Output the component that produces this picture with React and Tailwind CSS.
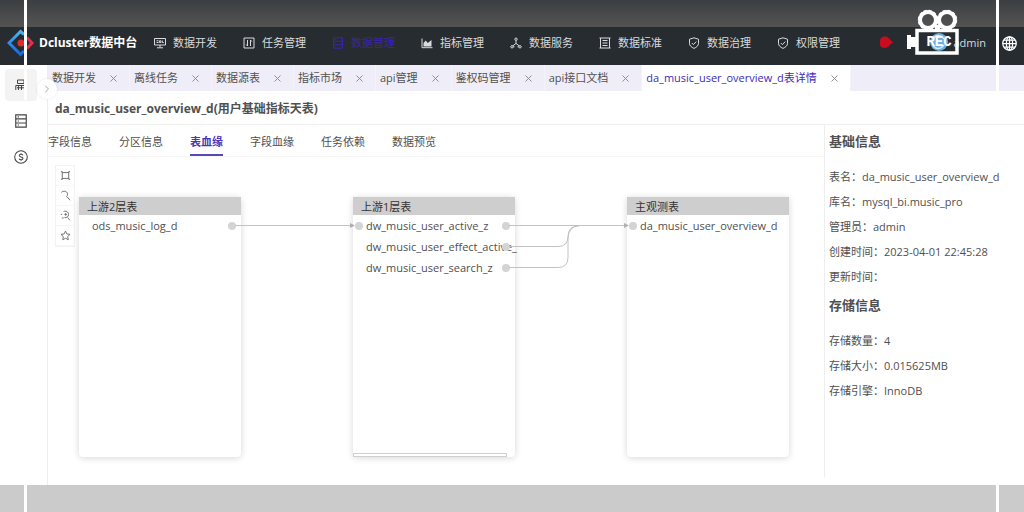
import React, { useState } from 'react';
import { ChevronRight, X } from 'lucide-react';

const Icon = ({ children, className = 'w-3 h-3' }) => (
  <svg viewBox="0 0 12 12" className={className} fill="none" stroke="currentColor" strokeWidth="1" aria-hidden="true">
    {children}
  </svg>
);

const ShieldIcon = () => (
  <Icon>
    <path d="M6 .8 10.5 2.2v4.2c0 2.2-1.8 3.8-4.5 5-2.7-1.2-4.5-2.8-4.5-5V2.2z" />
    <path d="m3.8 6 1.6 1.6 2.9-3" />
  </Icon>
);

const navItems = [
  {
    label: '数据开发',
    icon: (
      <Icon>
        <path d="M.5 1.5h11v6.5H.5zM6 8v2.5M3 10.8h6M2.5 3.8h2M2.5 5.5h2M5.5 3.8h1.4v1.7H5.5zM8.3 3.5v2h1.5" />
      </Icon>
    ),
  },
  {
    label: '任务管理',
    icon: (
      <Icon>
        <path d="M1 1h10v10H1zM4.500 3v6M3.200 7.500 4.500 9M7.500 9V3M7.500 3l1.300 1.500" />
      </Icon>
    ),
  },
  {
    label: '数据管理',
    icon: (
      <Icon>
        <path d="M1.5.8h9v10.4h-9zM1.5 4.2h9M1.5 7.7h9M3.2 2.5h1M3.2 6h1M3.2 9.4h1" />
      </Icon>
    ),
  },
  {
    label: '指标管理',
    icon: (
      <Icon>
        <path d="M1 1.5v9.2h10.5" />
        <path d="M2.5 9.5V6l2.2-2.4L6.8 6 10.5 3v6.5z" fill="currentColor" stroke="none" />
      </Icon>
    ),
  },
  {
    label: '数据服务',
    icon: (
      <Icon>
        <circle cx="6" cy="2.2" r="1.2" />
        <circle cx="2" cy="9.8" r="1.2" />
        <circle cx="10" cy="9.8" r="1.2" />
        <path d="M6 3.4v3L2.8 8.9M6 6.4l3.2 2.5M3.2 9.8h1.3M7.5 9.8h1.3" />
      </Icon>
    ),
  },
  {
    label: '数据标准',
    icon: (
      <Icon>
        <path d="M.5 1h11M.5 11h11M1.5 1v10M10.5 1v10M3.5 3.5h5M3.5 6h5M3.5 8.5h5" />
      </Icon>
    ),
  },
  { label: '数据治理', icon: <ShieldIcon /> },
  { label: '权限管理', icon: <ShieldIcon /> },
];

const openTabs = [
  '数据开发',
  '离线任务',
  '数据源表',
  '指标市场',
  'api管理',
  '鉴权码管理',
  'api接口文档',
  'da_music_user_overview_d表详情',
];

const detailTabs = ['字段信息', '分区信息', '表血缘', '字段血缘', '任务依赖', '数据预览'];

const baseInfo = [
  ['表名', 'da_music_user_overview_d'],
  ['库名', 'mysql_bi.music_pro'],
  ['管理员', 'admin'],
  ['创建时间', '2023-04-01 22:45:28'],
  ['更新时间', ''],
];

const storageInfo = [
  ['存储数量', '4'],
  ['存储大小', '0.015625MB'],
  ['存储引擎', 'InnoDB'],
];

const canvasTools = [
  {
    label: '框选',
    icon: <path d="M2.5 2.8h7M2.5 9.2h7M2.5 2.8v6.4M9.5 2.8v6.4M1 1.8h1.5v1.5M11 1.8H9.5v1.5M1 10.2h1.5V8.8M11 10.2H9.5V8.8" />,
  },
  { label: '放大', icon: <path d="M1.5 2.6C3.2.6 7.6.9 8.2 4c.3 1.6-.5 3-1.4 3.6M7.8 7.6l3.2 3.6" /> },
  {
    label: '缩小',
    icon: <path d="M3.8 1.8C6.2.4 9.5 2 9.3 5c-.1 2.5-2.4 3.8-4.5 3.2M8.2 8.2l2.6 3M.8 4.8h1.5M4.8 4.8h2.8M6.2 3.4v2.8M2 8.8h2" />,
  },
  { label: '收藏', icon: <path d="m6 1.2 1.5 3.1 3.4.5-2.5 2.4.6 3.4L6 9l-3 1.6.6-3.4-2.5-2.4 3.4-.5z" /> },
];

function Logo() {
  return (
    <svg viewBox="0 0 28 28" className="w-7 h-7 shrink-0" fill="none" aria-hidden="true">
      <defs>
        <linearGradient id="logoBlue" x1="0" y1="0" x2="0" y2="1">
          <stop offset="0" stopColor="#4bb4ea" />
          <stop offset="1" stopColor="#1668e8" />
        </linearGradient>
      </defs>
      <path d="M17 5.5 13.5 2.5 2 14l11.5 11.5L17 22" stroke="url(#logoBlue)" strokeWidth="3" />
      <path d="m20 8.5 5 5.5-5 5.5" stroke="#e0304a" strokeWidth="3" />
      <circle cx="14" cy="14" r="3.5" fill="#e02a30" />
    </svg>
  );
}

function GlobeIcon() {
  return (
    <Icon className="h-[15px] w-[15px] shrink-0 text-white">
      <circle cx="6" cy="6" r="5.4" />
      <ellipse cx="6" cy="6" rx="2.5" ry="5.4" />
      <path d="M6 .6v10.8M.6 6h10.8M1.4 3.2h9.2M1.4 8.8h9.2" />
    </Icon>
  );
}

function RecCamera() {
  return (
    <svg viewBox="0 0 54 48" className="absolute right-16 top-2 w-[54px] h-12 pointer-events-none" fill="none" aria-hidden="true">
      <circle cx="22" cy="12" r="8" stroke="#fff" strokeWidth="4" />
      <circle cx="41" cy="12" r="8" stroke="#fff" strokeWidth="4" />
      <circle cx="22" cy="12" r="9.500" stroke="#fff" strokeWidth="1.500" strokeDasharray="3 2" />
      <circle cx="41" cy="12" r="9.500" stroke="#fff" strokeWidth="1.500" strokeDasharray="3 2" />
      <path d="M29 17h5v5h-5z" fill="#fff" />
      <path d="M11 22.500h40v22.500H11z" stroke="#fff" strokeWidth="3.500" />
      <path d="M1 27h4v2h6v10H5v2H1z" fill="#fff" />
      <circle cx="33" cy="34" r="9" fill="#6aaee0" />
      <path d="M27 31c3-5 9-4 11 0M27 38c4 4 8 3 11-1" stroke="#d3e9f8" strokeWidth="1.500" />
      <text x="33" y="38" textAnchor="middle" fontSize="14" fontWeight="700" fill="#fff" fontFamily="Liberation Mono, monospace">
        REC
      </text>
    </svg>
  );
}

function LineageNode({ title, className, children }) {
  return (
    <div className={`absolute top-10 flex h-[260px] w-[162px] flex-col rounded-sm bg-white shadow-[0_1px_7px_rgba(0,0,0,0.16)] ${className}`}>
      <div className="h-[18px] bg-[#cecece] pl-2 leading-[20px] text-[#333]">{title}</div>
      {children}
    </div>
  );
}

function Field({ name, left, right }) {
  return (
    <div className="relative flex h-[21px] items-center pl-[13px]">
      {left && <span className="absolute left-[2px] h-2 w-2 rounded-full bg-[#d4d4d4]" />}
      <span className="whitespace-nowrap">{name}</span>
      {right && <span className="absolute right-[5px] h-2 w-2 rounded-full bg-[#d4d4d4]" />}
    </div>
  );
}

function InfoList({ title, rows }) {
  return (
    <section>
      <h2 className="py-1.5 text-[13px] font-bold leading-5">{title}</h2>
      <dl className="pt-[7px]">
        {rows.map(([label, value]) => (
          <div key={label} className="flex h-[25px] items-center whitespace-nowrap">
            <dt>{label}：</dt>
            <dd>{value}</dd>
          </div>
        ))}
      </dl>
    </section>
  );
}

// White guide lines of the recorder, one near each side of the window
function GuideLines({ className }) {
  return (
    <div className={`pointer-events-none absolute inset-x-0 flex justify-between pl-6 pr-[25px] ${className}`}>
      <span className="w-[3px] bg-white" />
      <span className="w-[3px] bg-white" />
    </div>
  );
}

export default function App() {
  const [activeTab, setActiveTab] = useState('表血缘');

  return (
    <div className="relative flex min-h-screen flex-col overflow-hidden bg-white font-['Open_Sans','Noto_Sans_CJK_SC',sans-serif] text-[11px] leading-4 text-[#505050]">
      <div className="h-[27px] bg-linear-to-b from-[#3b3f42] to-[#545353]" />

      {/* Top navigation */}
      <header className="flex h-[38px] items-center bg-[#272c30] pb-1.5 pl-[7px] pr-[7px] text-[#d9dbdc]">
        <Logo />
        <span className="ml-1 w-[115px] shrink-0 whitespace-nowrap text-xs font-bold text-white">Dcluster数据中台</span>
        <nav className="flex gap-[26px]">
          {navItems.map(item => (
            <a
              key={item.label}
              href="#"
              className={`flex items-center gap-[7px] whitespace-nowrap ${item.label === '数据管理' ? 'text-[#3a25a8]' : ''}`}
            >
              {item.icon}
              {item.label}
            </a>
          ))}
        </nav>
        <svg viewBox="0 0 14 14" className="ml-auto mr-[60px] h-3.5 w-3.5 shrink-0" aria-hidden="true">
          <path d="M1 5c0-5 7-6 9.500-2L14 6.500 11 8.500c-1 4-10 5-10 0z" fill="#c90d1e" />
        </svg>
        <span className="mr-4">admin</span>
        <GlobeIcon />
      </header>

      <div className="flex flex-1">
        {/* Side rail */}
        <aside className="relative flex w-12 shrink-0 flex-col items-center border-r border-[#eeeeee] pr-1.5 text-[#444]">
          <button aria-label="数据地图" className="mt-1 flex h-8 w-8 items-center justify-center rounded-sm bg-[#f3f3f4]">
            <Icon>
              <path d="M2.500 1h6.500v3.500H2.500zM.8 11V6.500h9.700V11M3.500 6.500V11M6.500 6.500V11M2 8.800h8.500M9 3h2" />
            </Icon>
          </button>
          <button aria-label="数据表" className="mt-1 flex h-8 w-8 items-center justify-center">
            <Icon className="h-3.5 w-3.5">
              <path d="M1.500.8h9v10.400h-9zM1.500 4.200h9M1.500 7.700h9M3.200 2.500h1M3.200 6h1M3.200 9.400h1" />
            </Icon>
          </button>
          <button aria-label="成本" className="mt-1 flex h-8 w-8 items-center justify-center">
            <Icon className="h-3.5 w-3.5">
              <circle cx="6" cy="6" r="5.400" strokeWidth="0.9" />
              <path d="M7.600 4.600C7.200 3.400 4.500 3.400 4.500 4.800c0 1.500 3.200.9 3.200 2.500C7.700 8.700 4.900 8.600 4.300 7.500M6 2.800v.9M6 8.400v.9" strokeWidth="0.9" />
            </Icon>
          </button>
          <button
            aria-label="展开"
            className="absolute -right-2.5 top-3.5 z-10 flex h-5 w-5 items-center justify-center rounded-full bg-white text-[#888] shadow-[0_0_3px_rgba(0,0,0,0.1)]"
          >
            <ChevronRight className="h-3 w-3" strokeWidth={1.5} />
          </button>
        </aside>

        <div className="flex min-w-0 flex-1 flex-col">
          {/* Opened pages */}
          <div className="flex h-[26px] bg-[#efeef8]">
            {openTabs.map((tab, i) => (
              <div
                key={tab}
                className={`flex items-center gap-3 whitespace-nowrap border-r border-[#f4f3fb] pl-1 pr-2.5 ${
                  i === openTabs.length - 1 ? 'bg-white text-[#3f2bb5]' : ''
                }`}
              >
                <a href="#">{tab}</a>
                <button aria-label={`关闭 ${tab}`} className="text-[#888]">
                  <X className="h-[11px] w-[11px]" strokeWidth={2} />
                </button>
              </div>
            ))}
          </div>

          <h1 className="h-[34px] border-b border-[#f0f0f0] pl-[7px] text-xs font-bold leading-9">
            da_music_user_overview_d(用户基础指标天表)
          </h1>

          <div className="flex flex-1">
            <main className="min-w-0 flex-1">
              <div role="tablist" className="flex h-8 gap-[27px] border-b border-[#f5f5f5]">
                {detailTabs.map(tab => (
                  <button
                    key={tab}
                    role="tab"
                    aria-selected={activeTab === tab}
                    onClick={() => setActiveTab(tab)}
                    className={`border-b-2 pt-1 ${
                      activeTab === tab ? 'border-[#5a48b8] font-bold text-[#4a35b5]' : 'border-transparent'
                    }`}
                  >
                    {tab}
                  </button>
                ))}
              </div>

              {/* Lineage canvas */}
              <div className="relative h-[328px]">
                <div className="absolute left-[7px] top-2 flex w-5 flex-col border border-[#f3f3f3] text-[#666]">
                  {canvasTools.map(tool => (
                    <button
                      key={tool.label}
                      aria-label={tool.label}
                      className="flex h-5 items-center justify-center border-b border-[#f6f6f6]"
                    >
                      <Icon className="h-[11px] w-[11px]">{tool.icon}</Icon>
                    </button>
                  ))}
                </div>

                <LineageNode title="上游2层表" className="left-[31px]">
                  <Field name="ods_music_log_d" right />
                </LineageNode>
                <LineageNode title="上游1层表" className="left-[305px]">
                  <Field name="dw_music_user_active_z" left right />
                  <Field name="dw_music_user_effect_active_" right />
                  <Field name="dw_music_user_search_z" right />
                  <div className="mt-auto h-1 w-[154px] border border-[#cfcfcf] bg-white" />
                </LineageNode>
                <LineageNode title="主观测表" className="left-[579px]">
                  <Field name="da_music_user_overview_d" left />
                </LineageNode>

                <svg className="pointer-events-none absolute inset-0 h-full w-full" fill="none" stroke="#c2c2c2" aria-hidden="true">
                  <path d="M187 68.500H305M461 68.500H579M461 89.500h49q10 0 10-10q0-11 12-11M461 110.500h49q10 0 10-10V82q0-13 12-13.500" />
                  <path d="m302 66 5 2.500-5 2.500zM576 66l5 2.500-5 2.500z" fill="#b0b0b0" stroke="none" />
                </svg>
              </div>
            </main>

            <aside className="mb-2 w-[200px] shrink-0 border-l border-[#eeeeee] pl-1">
              <InfoList title="基础信息" rows={baseInfo} />
              <InfoList title="存储信息" rows={storageInfo} />
            </aside>
          </div>
        </div>
      </div>

      <footer className="relative h-[27px] bg-[#cbcbcb]">
        <GuideLines className="inset-y-0" />
      </footer>

      <GuideLines className="top-0 h-[100px]" />
      <RecCamera />
    </div>
  );
}
